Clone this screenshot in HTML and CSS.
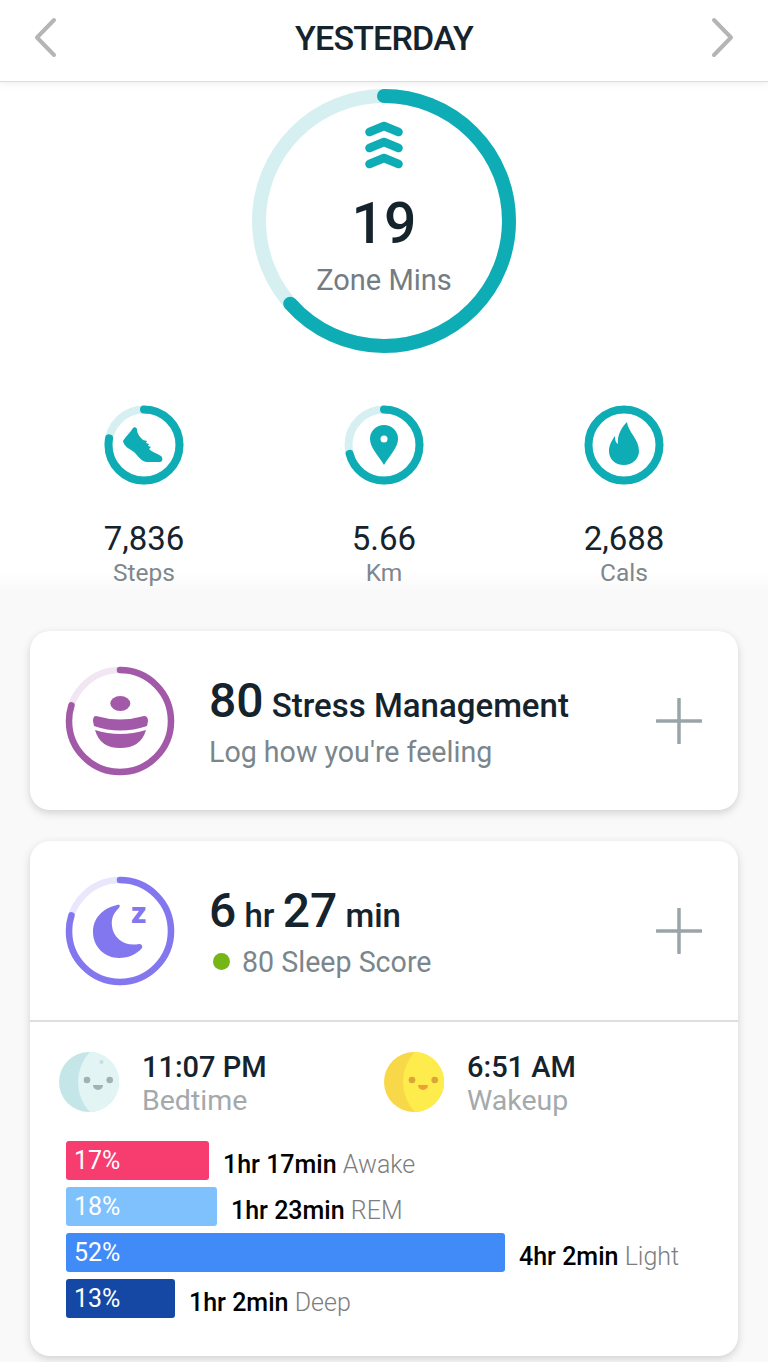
FILE: index.html
```html
<!DOCTYPE html>
<html lang="en">
<head>
    <meta charset="UTF-8">
    <meta name="viewport" content="width=device-width, initial-scale=1.0">
    <title>Yesterday</title>
    <link rel="stylesheet" href="styles.css">
</head>
<body>

    <header class="topbar">
        <svg class="nav-arrow" viewBox="0 0 24 42"><path d="M21 3 L4 20.5 L21 38"/></svg>
        <h1>YESTERDAY</h1>
        <svg class="nav-arrow" viewBox="0 0 24 42"><path d="M3 3 L20 20.5 L3 38"/></svg>
    </header>

    <section class="zone">
        <svg class="zone-ring" viewBox="0 0 266 266">
            <circle class="track-teal" cx="133" cy="133" r="125" pathLength="100"/>
            <circle class="arc-teal" cx="133" cy="133" r="125" pathLength="100" stroke-dasharray="63.5 100" transform="rotate(-90 133 133)"/>
        </svg>
        <div class="zone-text">
            <svg class="zone-chevrons" viewBox="0 0 38 50">
                <path d="M4.500 11 L19 5 L33.500 11"/>
                <path d="M4.500 27 L19 21 L33.500 27"/>
                <path d="M4.500 43 L19 37 L33.500 43"/>
            </svg>
            <div class="zone-number">19</div>
            <div class="zone-label">Zone Mins</div>
        </div>
    </section>

    <section class="stats">
        <div class="stat">
            <svg class="stat-icon" viewBox="0 0 80 80">
                <circle class="track-teal thin" cx="40" cy="40" r="35.500" pathLength="100"/>
                <circle class="arc-teal thin" cx="40" cy="40" r="35.500" pathLength="100" stroke-dasharray="78 100" transform="rotate(-90 40 40)"/>
                <path class="fill-teal" d="M29 23 C26 28 22 31 19 36 C20 42 26 44 30 47 C34 51 38 57 43 57 L56 57 C59 57 59 53 57 51 C52 48 48 47 45 44 L47 42 L44 41 L45 39 L42 38 L43 36 L39 35 C36 32 33 29 33 24 C32 22 30 22 29 23Z"/>
            </svg>
            <div class="stat-number">7,836</div>
            <div class="stat-label">Steps</div>
        </div>
        <div class="stat">
            <svg class="stat-icon" viewBox="0 0 80 80">
                <circle class="track-teal thin" cx="40" cy="40" r="35.500" pathLength="100"/>
                <circle class="arc-teal thin" cx="40" cy="40" r="35.500" pathLength="100" stroke-dasharray="71 100" transform="rotate(-90 40 40)"/>
                <path class="fill-teal" d="M40 20 a14 14 0 0 1 14 14 c0 9 -9 17 -14 26 c-5 -9 -14 -17 -14 -26 a14 14 0 0 1 14 -14z"/>
                <circle class="fill-white" cx="40" cy="34" r="3.500"/>
            </svg>
            <div class="stat-number">5.66</div>
            <div class="stat-label">Km</div>
        </div>
        <div class="stat">
            <svg class="stat-icon" viewBox="0 0 80 80">
                <circle class="arc-teal thin" cx="40" cy="40" r="35.500"/>
                <path class="fill-teal" d="M43 17 C44 27 55 34 55 46 C55 54 48 60 40 60 C31 60 25 54 25 46 C25 40 28 35 31 31 C31 36 32 38 34 39 C33 31 37 23 43 17Z"/>
            </svg>
            <div class="stat-number">2,688</div>
            <div class="stat-label">Cals</div>
        </div>
    </section>

    <section class="card">
        <div class="card-head">
            <svg class="card-icon" viewBox="0 0 110 110">
                <circle class="track-purple" cx="55" cy="55" r="51" pathLength="100"/>
                <circle class="arc-purple" cx="55" cy="55" r="51" pathLength="100" stroke-dasharray="80 100" transform="rotate(-90 55 55)"/>
                <ellipse class="fill-purple" cx="55.300" cy="37.500" rx="10" ry="7.500"/>
                <path class="fill-purple" d="M31 50 Q55 57 79 50 Q83 50 83 55 L82 60 Q55 69 29 60 L28 55 Q28 50 31 50Z"/>
                <path class="fill-purple" d="M30 64 Q55 72 81 64 Q76 82 55 82 Q35 82 30 64Z"/>
            </svg>
            <div class="card-text">
                <div class="card-title"><span class="big">80</span> Stress Management</div>
                <div class="card-sub">Log how you're feeling</div>
            </div>
            <svg class="plus" viewBox="0 0 46 46"><path d="M23 1 V45 M1 23 H45"/></svg>
        </div>
    </section>

    <section class="card sleep">
        <div class="card-head">
            <svg class="card-icon" viewBox="0 0 110 110">
                <circle class="track-violet" cx="55" cy="55" r="51" pathLength="100"/>
                <circle class="arc-violet" cx="55" cy="55" r="51" pathLength="100" stroke-dasharray="80 100" transform="rotate(-90 55 55)"/>
                <path class="fill-violet" d="M52 29 C38 32 28 42 28 56 C28 71 40 82 54 82 C64 82 72 78 77 72 C78 69 76 68 74 68 C60 71 48 62 47 50 C46 42 49 37 53 33 C56 30 55 28 52 29Z"/>
                <text class="moon-z" x="66" y="47">z</text>
            </svg>
            <div class="card-text">
                <div class="card-title"><span class="big">6</span> hr <span class="big">27</span> min</div>
                <div class="card-sub score"><span class="dot"></span>80 Sleep Score</div>
            </div>
            <svg class="plus" viewBox="0 0 46 46"><path d="M23 1 V45 M1 23 H45"/></svg>
        </div>

        <div class="sleep-details">
            <div class="times">
                <div class="time">
                    <svg class="face" viewBox="0 0 60 60">
                        <defs><clipPath id="faceClip"><circle cx="30" cy="30" r="30"/></clipPath></defs>
                        <circle cx="30" cy="30" r="30" fill="#c4e6e8"/>
                        <circle cx="63" cy="30" r="44" fill="#e3f4f5" clip-path="url(#faceClip)"/>
                        <circle cx="42.500" cy="10" r="2" fill="#c4dfe2"/>
                        <circle cx="28" cy="28" r="3.300" fill="#9eb3b5"/>
                        <circle cx="50.700" cy="28" r="3.300" fill="#9eb3b5"/>
                        <path d="M34 33 H44 A5 5 0 0 1 34 33Z" fill="#9eb3b5"/>
                    </svg>
                    <div class="time-text">
                        <div class="time-value">11:07 PM</div>
                        <div class="time-label">Bedtime</div>
                    </div>
                </div>
                <div class="time">
                    <svg class="face" viewBox="0 0 60 60">
                        <circle cx="30" cy="30" r="30" fill="#f8d848"/>
                        <circle cx="63" cy="30" r="44" fill="#fdec4b" clip-path="url(#faceClip)"/>
                        <circle cx="28" cy="28" r="3.300" fill="#d9a63c"/>
                        <circle cx="50.700" cy="28" r="3.300" fill="#d9a63c"/>
                        <path d="M34 33 H44 A5 5 0 0 1 34 33Z" fill="#ee9f35"/>
                    </svg>
                    <div class="time-text">
                        <div class="time-value">6:51 AM</div>
                        <div class="time-label">Wakeup</div>
                    </div>
                </div>
            </div>

            <div class="stages">
                <div class="stage">
                    <div class="bar awake" style="width: 143px">17%</div>
                    <div class="stage-text"><b>1hr 17min</b> <span>Awake</span></div>
                </div>
                <div class="stage">
                    <div class="bar rem" style="width: 151px">18%</div>
                    <div class="stage-text"><b>1hr 23min</b> <span>REM</span></div>
                </div>
                <div class="stage">
                    <div class="bar light" style="width: 439px">52%</div>
                    <div class="stage-text"><b>4hr 2min</b> <span>Light</span></div>
                </div>
                <div class="stage">
                    <div class="bar deep" style="width: 109px">13%</div>
                    <div class="stage-text"><b>1hr 2min</b> <span>Deep</span></div>
                </div>
            </div>
        </div>
    </section>

</body>
</html>
```

FILE: styles.css
```css
html {
    height: 100%;
}
body {
    margin: 0;
    height: 1362px;
    overflow: hidden;
    font-family: Roboto, "Liberation Sans", sans-serif;
    color: #15232d;
    background: linear-gradient(#fff 572px, #f9f9f9 590px);
}

/* top bar */
.topbar {
    height: 75px;
    padding: 0 33px 6px;
    display: flex;
    align-items: center;
    justify-content: space-between;
    background-color: #fff;
    border-bottom: 1px solid #dcdcdc;
    box-shadow: 0 1px 8px rgba(0, 0, 0, 0.08);
}
.topbar h1 {
    margin: 0;
    font-size: 34px;
    font-weight: 500;
    letter-spacing: -0.8px;
}
.nav-arrow {
    width: 24px;
    height: 42px;
    fill: none;
    stroke: #b5b5b5;
    stroke-width: 4;
    stroke-linecap: round;
    stroke-linejoin: round;
}

/* zone minutes ring */
.zone {
    width: 266px;
    height: 266px;
    margin: 6px auto 0;
    display: grid;
}
.zone-ring,
.zone-text {
    grid-area: 1 / 1;
}
.zone-ring circle {
    fill: none;
    stroke-width: 14;
}
.zone-text {
    display: flex;
    flex-direction: column;
    align-items: center;
    padding-top: 33px;
}
.zone-chevrons {
    width: 38px;
    height: 50px;
    fill: none;
    stroke: #0eacb4;
    stroke-width: 8.500;
    stroke-linecap: round;
    stroke-linejoin: round;
}
.zone-number {
    margin-top: 19px;
    font-size: 57px;
    font-weight: 500;
    line-height: 68px;
}
.zone-label {
    margin-top: 5px;
    font-size: 29px;
    line-height: 34px;
    color: #747c82;
}

.track-teal,
.track-purple,
.track-violet,
.arc-teal,
.arc-purple,
.arc-violet {
    fill: none;
    stroke-linecap: round;
}
.track-teal {
    stroke: #d6f0f2;
}
.arc-teal {
    stroke: #0eacb4;
}
.track-teal.thin,
.arc-teal.thin {
    stroke-width: 8;
}
.fill-teal {
    fill: #0eacb4;
}
.fill-white {
    fill: #fff;
}

/* steps, km, cals */
.stats {
    margin: 51px 24px 0;
    display: grid;
    grid-template-columns: repeat(3, 240px);
}
.stat {
    display: flex;
    flex-direction: column;
    align-items: center;
}
.stat-icon {
    width: 80px;
    height: 80px;
}
.stat-number {
    margin-top: 35px;
    font-size: 33px;
    line-height: 38px;
    color: #15232d;
}
.stat-label {
    font-size: 24.5px;
    line-height: 29px;
    color: #7f878c;
}

/* cards */
.card {
    margin: 44px 30px 0;
    background-color: #fff;
    border-radius: 20px;
    box-shadow: 0 3px 8px rgba(0, 0, 0, 0.16);
}
.card.sleep {
    margin-top: 31px;
}
.card-head {
    height: 179px;
    padding: 0 36px 0 35px;
    display: flex;
    align-items: center;
    gap: 34px;
}
.card-icon {
    width: 110px;
    height: 110px;
    flex: none;
}
.card-text {
    flex: 1;
}
.card-title {
    font-size: 33px;
    font-weight: 500;
    line-height: 56px;
}
.card-title .big {
    font-size: 48px;
}
.card-sub {
    margin-top: 1px;
    font-size: 28.6px;
    line-height: 34px;
    color: #7b868c;
}
.card-sub.score {
    display: flex;
    align-items: center;
}
.dot {
    width: 17px;
    height: 17px;
    margin: 0 12px 0 4px;
    border-radius: 50%;
    background-color: #76b516;
}
.plus {
    width: 46px;
    height: 46px;
    flex: none;
    fill: none;
    stroke: #9aa5a9;
    stroke-width: 3.500;
    stroke-linecap: round;
}

.track-purple {
    stroke: #f1e6f2;
    stroke-width: 6.500;
}
.arc-purple {
    stroke: #a25aa8;
    stroke-width: 6.500;
}
.fill-purple {
    fill: #a25aa8;
}
.track-violet {
    stroke: #e9e7fb;
    stroke-width: 6.500;
}
.arc-violet {
    stroke: #8377ef;
    stroke-width: 6.500;
}
.fill-violet {
    fill: #8377ef;
}
.moon-z {
    font-size: 30px;
    font-weight: 900;
    fill: #8377ef;
}

/* sleep details */
.sleep-details {
    border-top: 2px solid #dedede;
    padding: 28px 29px 38px;
}
.times {
    display: flex;
}
.time {
    width: 325px;
    display: flex;
    align-items: center;
    gap: 23px;
}
.face {
    width: 60px;
    height: 60px;
    margin-bottom: 4px;
    flex: none;
}
.time-value {
    font-size: 29px;
    font-weight: 500;
    line-height: 34px;
}
.time-label {
    font-size: 28.5px;
    line-height: 34px;
    color: #a4a9ac;
}
.stages {
    margin: 23px 0 0 7px;
    display: flex;
    flex-direction: column;
    gap: 7px;
}
.stage {
    display: flex;
    align-items: center;
    gap: 14px;
}
.bar {
    height: 39px;
    padding-left: 8px;
    box-sizing: border-box;
    border-radius: 3px;
    color: #fff;
    font-size: 25px;
    line-height: 40px;
}
.bar.awake {
    background-color: #f73c70;
}
.bar.rem {
    background-color: #7fc1fd;
}
.bar.light {
    background-color: #418bf8;
}
.bar.deep {
    background-color: #1448a4;
}
.stage-text {
    margin-top: 7px;
    font-size: 25px;
    color: #000;
}
.stage-text b {
    font-weight: 500;
}
.stage-text span {
    font-weight: 300;
    color: #7d7d7d;
}
```
